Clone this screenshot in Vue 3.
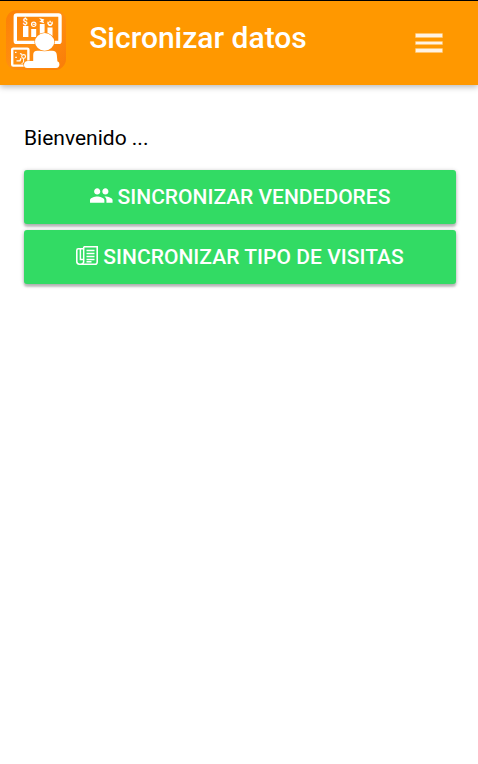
<template>
  <div class="page">
    <header class="header">
      <svg class="logo" viewBox="0 0 60 60">
        <defs>
          <linearGradient id="logoBg" x1="0" y1="0" x2="1" y2="1">
            <stop offset="0" stop-color="#fd7f06" />
            <stop offset="0.5" stop-color="#ff8f10" />
            <stop offset="1" stop-color="#f97c08" />
          </linearGradient>
        </defs>
        <rect width="60" height="60" rx="11" fill="url(#logoBg)" />
        <!-- board -->
        <rect x="9.3" y="5" width="44.7" height="27.4" rx="1.5" fill="none" stroke="#fff" stroke-width="3.4" />
        <g fill="#fff">
          <rect x="17" y="16" width="5.4" height="11" />
          <rect x="25.2" y="19" width="5" height="8" />
          <rect x="33.8" y="14" width="4.8" height="12" />
          <rect x="41.5" y="17.5" width="5" height="9" />
          <text x="16.8" y="14.6" class="money">$</text>
          <path d="M33 8l5.4 1.6-1.2 1.4 1 2.3-5-1.5 2-1.3z" />
        </g>
        <circle cx="27.7" cy="14.3" r="2.2" fill="none" stroke="#fff" stroke-width="1.1" />
        <path d="M26.5 14.3h2.6" stroke="#fff" stroke-width="1" />
        <path d="M42.4 11.8a2.1 2.1 0 1 0 3.4 0M44.1 10.8v2" fill="none" stroke="#fff" stroke-width="1.5" />
        <!-- small chart -->
        <rect x="6.2" y="38.6" width="16.2" height="17" rx="1" fill="#ff8f10" stroke="#fff" stroke-width="2.4" />
        <path d="M9 42.3h1.5M9.3 47.3h1.5M10.5 50.8h3.5l1-2.5M14 43.5l2 .8" fill="none" stroke="#fff" stroke-width="1.3" />
        <circle cx="17.6" cy="46.5" r="1.9" fill="none" stroke="#fff" stroke-width="1.1" />
        <path d="M17.6 49v3l-2 2" fill="none" stroke="#fff" stroke-width="1" />
        <!-- person -->
        <g stroke="#ff8a0c" stroke-width="1.2" paint-order="stroke" fill="#fff">
          <path d="M18 55q0-3.9 4-3.9h5.2V45q0-4.2 4.2-4.2h14.8q4.2 0 4.6 4.2l.6 6.2q2.3.8 2 3.4-.2 3.4-3.4 3.4H21.2Q18 58 18 55z" />
          <ellipse cx="38.6" cy="31.9" rx="9.6" ry="8.8" />
        </g>
      </svg>
      <h1 class="title">Sicronizar datos</h1>
      <button class="menu" aria-label="Menu">
        <span></span>
        <span></span>
        <span></span>
      </button>
    </header>

    <main class="content">
      <p class="welcome">Bienvenido ...</p>
      <button v-for="item in actions" :key="item.icon" class="btn">
        <svg v-if="item.icon === 'people'" class="icon" viewBox="0 0 24 24" fill="#fff">
          <path d="M16 11c1.66 0 2.99-1.34 2.99-3S17.66 5 16 5s-3 1.34-3 3 1.34 3 3 3zm-8 0c1.66 0 2.99-1.34 2.99-3S9.66 5 8 5 5 6.34 5 8s1.34 3 3 3zm0 2c-2.33 0-7 1.17-7 3.5V19h14v-2.5c0-2.33-4.67-3.5-7-3.5zm8 0c-.29 0-.62.02-.97.05 1.16.84 1.97 1.97 1.97 3.45V19h6v-2.5c0-2.33-4.67-3.5-7-3.5z" />
        </svg>
        <svg v-else class="icon paper" viewBox="0 0 22 19" fill="none" stroke="#fff">
          <path d="M7.7.8h13.5v15.1q0 2.3-2.3 2.3H3.4Q.8 18.2.8 15.6V4.4q0-1.6 1.6-1.6h5" stroke-width="1.6" />
          <path d="M7.7.8v14.4q0 2.6-2.2 2.9M4.4 3v10.5h3" stroke-width="1.5" />
          <path d="M10.5 4.5h8M10.5 7.5h8M10.5 10.5h8M10.5 13.5h8M10.5 15.8h5" stroke-width="1.6" />
        </svg>
        <span>{{ item.label }}</span>
      </button>
    </main>
  </div>
</template>

<script setup>
const actions = [
  { icon: 'people', label: 'Sincronizar vendedores' },
  { icon: 'paper', label: 'Sincronizar tipo de visitas' },
];
</script>

<style>
body {
  margin: 0;
  background: #fff;
}
</style>

<style scoped>
.page {
  min-height: 764px;
  font-family: Roboto, "Liberation Sans", sans-serif;
  color: #000;
  background: #fff;
}

.header {
  display: flex;
  align-items: flex-start;
  box-sizing: border-box;
  height: 85px;
  padding: 9px 30px 0 6px;
  border-top: 1px solid #000;
  background: #ff9800;
  box-shadow: 0 2px 6px rgba(0, 0, 0, 0.28);
}

.logo {
  flex: none;
  width: 60px;
  height: 60px;
}

.money {
  font: bold 9px Roboto, sans-serif;
}

.title {
  flex: 1;
  margin: 10px 0 0 23.2px;
  font-size: 30px;
  font-weight: 500;
  line-height: 36px;
  color: #fff;
}

.menu {
  display: flex;
  flex-direction: column;
  gap: 3px;
  width: 38px;
  margin-top: 23.4px;
  padding: 0 5px;
  border: none;
  background: none;
}

.menu span {
  height: 4.4px;
  border-radius: 1px;
  background: #fff3e4;
  box-sizing: border-box;
  border: 1px solid #ffc670;
}

.content {
  padding: 38px 22px 0 24px;
}

.welcome {
  margin: 0 0 17.4px;
  font-size: 21px;
  line-height: 30px;
}

.btn {
  display: flex;
  align-items: center;
  justify-content: center;
  gap: 4px;
  width: 100%;
  height: 54px;
  margin-bottom: 6px;
  padding: 0 0.6px 0.6px 0;
  border: none;
  border-radius: 3px;
  background: #32db64;
  box-shadow: 0 3px 2px rgba(0, 0, 0, 0.16), 0 1px 4px rgba(0, 0, 0, 0.28);
  color: #fff;
  font-family: inherit;
  font-size: 21px;
  font-weight: 500;
  text-transform: uppercase;
}

.btn:last-child {
  padding-right: 0;
  letter-spacing: 0.04px;
}

.icon {
  width: 24.6px;
  height: 25px;
  margin-bottom: 3.4px;
}

.paper {
  width: 22px;
  height: 19px;
  margin-right: 1px;
}
</style>
